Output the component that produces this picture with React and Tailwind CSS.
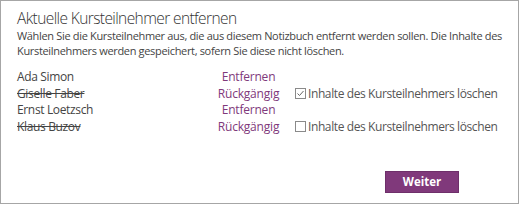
import React from "react";

const rows = [
  { name: "Ada Simon", removed: false },
  { name: "Giselle Faber", removed: true, checked: true },
  { name: "Ernst Loetzsch", removed: false },
  { name: "Klaus Buzov", removed: true, checked: false },
];

function Box({ checked }) {
  return (
    <svg width="11" height="11" viewBox="0 0 11 11" className="shrink-0">
      <rect x="0.5" y="0.5" width="10" height="10" fill="white" stroke="#8a8a8a" strokeWidth="1" />
      {checked && (
        <path d="M2.5 5.5 L4.5 7.5 L8.5 3" fill="none" stroke="#666" strokeWidth="1" />
      )}
    </svg>
  );
}

export default function App() {
  return (
    <div
      className="w-[519px] h-[204px] border border-[#a6a6a6] bg-white flex flex-col pl-[16px] pr-[10px]"
      style={{ fontFamily: '"Open Sans", "Noto Sans", sans-serif' }}
    >
      <div className="mt-[7px] text-[15.5px] leading-[20px] tracking-[-0.6px] text-[#333] font-light whitespace-nowrap">
        Aktuelle Kursteilnehmer entfernen
      </div>
      <div className="text-[11px] leading-[15px] tracking-[-0.33px] text-[#444] whitespace-nowrap">
        <div>Wählen Sie die Kursteilnehmer aus, die aus diesem Notizbuch entfernt werden sollen. Die Inhalte des</div>
        <div>Kursteilnehmers werden gespeichert, sofern Sie diese nicht löschen.</div>
      </div>
      <div className="mt-[11px] flex flex-col text-[12px] leading-[16.5px] whitespace-nowrap">
        {rows.map((r) => (
          <div key={r.name} className="flex items-center">
            <div className={`w-[185px] tracking-[-0.35px] text-[#444] ${r.removed ? "line-through" : ""}`}>{r.name}</div>
            <div className="w-[93px] text-center tracking-[-0.2px] text-[#80397b]">{r.removed ? "Rückgängig" : "Entfernen"}</div>
            {r.removed && (
              <div className="flex items-center gap-[2px] tracking-[-0.4px] text-[#555]">
                <Box checked={r.checked} />
                <span>Inhalte des Kursteilnehmers löschen</span>
              </div>
            )}
          </div>
        ))}
      </div>
      <div className="mt-auto mb-[10px] flex justify-end pr-[49px]">
        <button className="w-[74px] h-[22px] bg-[#80397b] text-white text-[11.5px] font-bold border border-[#6e2f6a]">
          Weiter
        </button>
      </div>
    </div>
  );
}
